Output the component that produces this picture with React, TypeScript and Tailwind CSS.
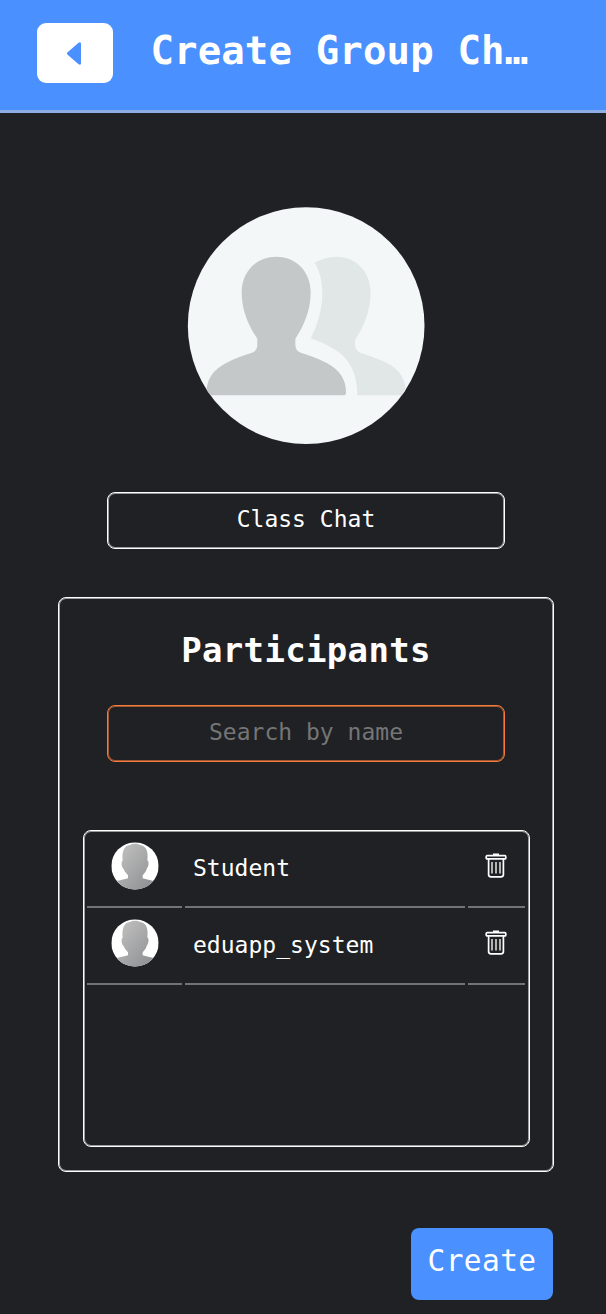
const people = ["Student", "eduapp_system"];

function GroupPicture() {
  return (
    <svg viewBox="0 0 750 750" className="h-[250px] w-[250px] shrink-0" aria-hidden="true">
      <defs>
        <clipPath id="group-circle"><circle cx="378.500" cy="377" r="355" /></clipPath>
      </defs>
      <g clipPath="url(#group-circle)">
        <rect width="750" height="750" fill="#f3f7f8" />
        <path fill="#e1e7e6" d="M404 188C425 176 445 170 470 170C530 170 572 218 572 278C572 330 552 380 525 420V432Q525 453 545 460C590 474 632 490 655 514C670 532 678 555 678 586H532C532 545 523 503 492 470C465 445 430 428 392 415C412 375 427 330 427 278C427 245 418 210 404 188Z" />
        <path fill="#c4c8c9" d="M289 170C350 170 392 217 392 276C392 330 373 375 346 416V434Q346 453 364 459C410 473 452 490 474 514C490 532 498 550 498 578Q498 586 490 586H79C79 550 88 532 104 514C127 490 168 473 214 459Q232 453 232 434V416C204 375 185 330 185 276C185 217 228 170 289 170Z" />
      </g>
    </svg>
  );
}

function PersonPicture({ id }: { id: string }) {
  return (
    <svg viewBox="-1 -1 144 144" className="h-[48px] w-[48px]" aria-hidden="true">
      <defs>
        <clipPath id={`circle-${id}`}><circle cx="71" cy="71" r="71" /></clipPath>
        <linearGradient id={`shade-${id}`} x1="0" y1="0" x2="1" y2="1">
          <stop offset="0" stopColor="#c5c5c5" />
          <stop offset="1" stopColor="#8b8c8e" />
        </linearGradient>
      </defs>
      <g clipPath={`url(#circle-${id})`}>
        <rect width="142" height="142" fill="#fff" />
        <path fill={`url(#shade-${id})`} d="M34 55C31 29 38 9 56 8C66 2 82 4 89 9C106 12 111 30 108 54C115 58 111 75 106 80C104 88 98 94 94 99V108C105 112 117 113 130 117V142H12V117C26 113 39 112 50 108V99C45 92 39 88 37 80C31 75 28 58 34 55Z" />
      </g>
    </svg>
  );
}

function Trash() {
  return (
    <svg viewBox="0 0 22 25" className="h-[25px] w-[22px]" fill="none" stroke="#fff" strokeWidth="1.700" aria-hidden="true">
      <rect x="1.200" y="2.700" width="19.600" height="3.200" rx="1" />
      <path d="M3.600 6V21.500Q3.600 23.800 5.900 23.800H16.100Q18.400 23.800 18.400 21.500V6" />
      <path strokeWidth="1.300" d="M7 9V20.500M11 9V20.500M15 9V20.500" />
      <path strokeWidth="2" d="M8 1.500H14" />
    </svg>
  );
}

export default function App() {
  return (
    <div className="flex h-[1314px] w-[606px] flex-col overflow-hidden bg-[#202124] font-['DejaVu_Sans_Mono',monospace] text-white">
      <header className="flex h-[112.500px] shrink-0 border-b-[3px] border-[#8faee6] bg-[#4a90ff] pl-[37.400px] pt-[23px]">
        <button className="flex h-[60.400px] w-[76px] items-center justify-center rounded-[9px] bg-white pr-[3px]" aria-label="Back">
          <svg viewBox="0 0 14 23" className="h-[23px] w-[14px]" aria-hidden="true">
            <path fill="#4a90ff" d="M.6 10.300 11.600 .8Q14 -.5 14 2V21Q14 23.500 11.600 22.200L.6 12.700Q-.6 11.500 .6 10.300Z" />
          </svg>
        </button>
        <h1 className="ml-[37px] mt-[3px] w-[390px] whitespace-nowrap text-[39px] font-bold leading-[50px] tracking-[0.140px]">Create Group Ch…</h1>
      </header>
      <main className="flex flex-col">
        <div className="ml-[180px] mt-[87.500px] h-[250px]"><GroupPicture /></div>
        <div className="ml-[107px] mt-[42px] h-[57px] w-[398px] rounded-[8px] border border-white text-center text-[23px] leading-[53px] tracking-[0.020px] shadow-[inset_0_0_0_1px_rgba(255,255,255,0.55)]">Class Chat</div>
        <section className="ml-[58px] mt-[48px] flex h-[575px] w-[496px] flex-col items-center rounded-[8px] border border-white shadow-[inset_0_0_0_1px_rgba(255,255,255,0.55)]">
          <h2 className="mt-[32px] text-[34px] font-bold leading-[40px] tracking-[0.330px]">Participants</h2>
          <div className="mt-[35px] h-[57px] w-[398px] rounded-[8px] border border-[#f47b3b] text-center text-[23px] leading-[53px] tracking-[0.020px] text-[#757575] shadow-[inset_0_0_0_1px_rgba(244,123,59,0.6)]">Search by name</div>
          <div className="mt-[68px] h-[317px] w-[447px] rounded-[8px] border border-white px-[3px] shadow-[inset_0_0_0_1px_rgba(255,255,255,0.55)]">
            {people.map((name) => (
              <div key={name} className="grid h-[77px] grid-cols-[95px_280px_57px] gap-[3px]">
                <div className="flex justify-center border-b-2 border-[#717374] pl-[1px] pt-[11px]"><PersonPicture id={name} /></div>
                <div className="border-b-2 border-[#717374] pl-[8.500px] pt-[22px] text-[23px] leading-[30px] tracking-[0.020px]">{name}</div>
                <div className="flex justify-center border-b-2 border-[#717374] pt-[22px]"><Trash /></div>
              </div>
            ))}
          </div>
        </section>
        <button className="ml-[411px] mt-[56px] h-[72px] w-[142px] rounded-[8px] bg-[#4a90ff] pb-[5px] text-[29.500px] tracking-[0.400px]">Create</button>
      </main>
    </div>
  );
}
